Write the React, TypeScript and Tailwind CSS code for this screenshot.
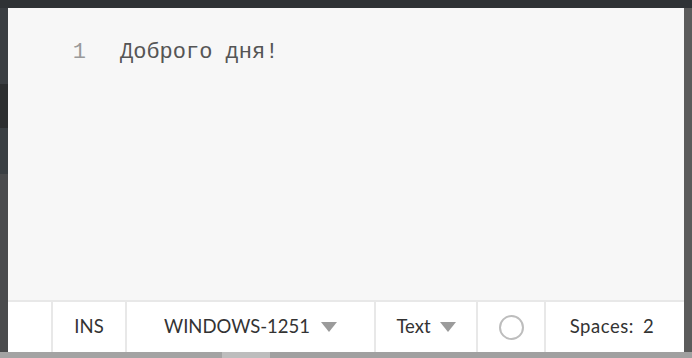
import React from 'react';

const Caret: React.FC = () => (
  <svg width="16" height="10" viewBox="0 0 16 10" className="shrink-0">
    <path d="M0 0 H16 L8 10 Z" fill="#9b9b9b" />
  </svg>
);

const App: React.FC = () => {
  return (
    <div className="w-[692px] h-[358px] flex flex-col bg-[#2f3235] overflow-hidden">
      <div className="h-2 shrink-0 bg-[#2f3235]" />
      <div className="flex flex-1 min-h-0">
        <div className="w-2 flex flex-col">
          <div className="h-[76px] bg-[#3a3e42]" />
          <div className="h-[44px] bg-[#2c2e30]" />
          <div className="h-[46px] bg-[#3a3f43]" />
          <div className="flex-1 bg-[#4a4b4d]" />
        </div>

        <div className="flex-1 flex flex-col bg-[#f7f7f7]">
          <div className="flex-1 flex pt-[31px] font-['Liberation_Mono',monospace] text-[22px] leading-[28px]">
            <div className="w-[78px] text-right text-[#9a9a9a]">1</div>
            <div className="pl-[34px] text-[#555555]">Доброго дня!</div>
          </div>

          <div className="h-[52px] flex border-t-2 border-[#e8e8e8] bg-white font-['Lato',sans-serif] text-[18.5px] text-[#333333]">
            <div className="w-[45px] border-r-2 border-[#e8e8e8]" />
            <div className="w-[74px] flex items-center justify-center border-r-2 border-[#e8e8e8]">INS</div>
            <div className="w-[249px] flex items-center justify-center gap-[11px] border-r-2 border-[#e8e8e8]">
              <span>WINDOWS-1251</span>
              <Caret />
            </div>
            <div className="w-[102px] flex items-center justify-center gap-[9px] border-r-2 border-[#e8e8e8]">
              <span>Text</span>
              <Caret />
            </div>
            <div className="w-[68px] flex items-center justify-center border-r-2 border-[#e8e8e8]">
              <div className="w-[25px] h-[25px] rounded-full border-2 border-[#bdbdbd]" />
            </div>
            <div className="flex-1 flex items-center justify-center gap-[9px] pr-[6px] tracking-[0.03em]">
              <span>Spaces:</span>
              <span>2</span>
            </div>
          </div>
        </div>

        <div className="w-2 bg-[#5b5b5b]" />
      </div>
      <div className="h-[6px] shrink-0 flex bg-[#9c9c9c]">
        <div className="w-[222px] bg-[#a3a3a3]" />
        <div className="w-[48px] bg-[#bdbdbd]" />
        <div className="flex-1 bg-[#a0a0a0]" />
      </div>
    </div>
  );
};

export default App;
